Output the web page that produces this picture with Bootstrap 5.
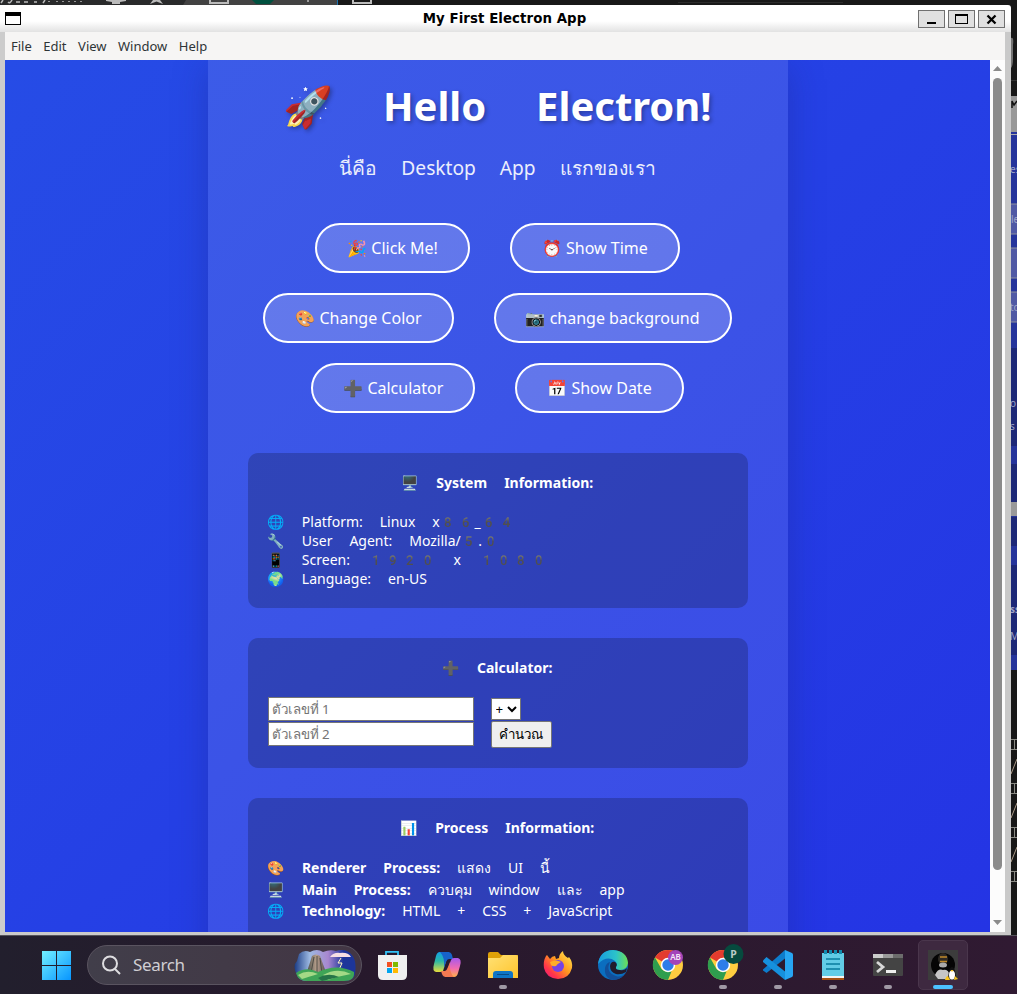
<!DOCTYPE html>
<html lang="en">
<head>
<meta charset="utf-8">
<title>My First Electron App</title>
<link rel="stylesheet" href="https://cdn.jsdelivr.net/npm/bootstrap@5.3.0/dist/css/bootstrap.min.css">
<style>
html,body{width:1017px;height:994px;overflow:hidden;margin:0}
body{background:#181818;font-family:"Noto Sans","Noto Color Emoji",sans-serif;color:#fff;line-height:1.2}
svg{display:block;flex:none}
.backtop{height:5px;flex:none}
.main-area{height:930px;flex:none}
.win{width:1011px;flex:none}
.titlebar{height:27px;background:linear-gradient(#fff 60%,#e2e2e2);color:#000;border-top-right-radius:3px;padding:0 6px 0 5px}
.titlebar .ttl{font:bold 13.33px/26px "DejaVu Sans",sans-serif;padding-left:70px;letter-spacing:.08px}
.wbtn{width:27px;height:18px;background:#e0e0e0;border:1px solid #707070}
.frame{border-left:5px solid #ccc;border-right:6px solid #c9c9c9;border-bottom:3px solid #cbcaca;height:903px}
.menus{height:28px;background:#f6f5f4;color:#2e3436;font-size:13px;line-height:28px;padding-left:6px;gap:11.5px}
.view{width:985px;height:872px;background:linear-gradient(135deg,#264ce6 0%,#2434e4 100%);overflow:hidden}
.sbar{width:15px;background:#fcfcfc;padding:6px 0 4px}
.thumb{width:9px;height:792px;border-radius:5px;background:#8b8b8b;margin-top:7px}
.panel{width:580px;height:960px;background:rgba(255,255,255,.1);box-shadow:0 8px 32px rgba(31,38,135,.37);padding:18px 40px 0;margin-left:202.5px}
.em{font-family:"Noto Color Emoji","Noto Sans",sans-serif}
h1{font-size:40px;font-weight:700;line-height:60px;margin:0;text-shadow:2px 2px 4px rgba(0,0,0,.3)}
.sub{font-size:19.2px;line-height:30px;margin:16px 0 39px;opacity:.9}
.pill{height:50px;border:2px solid #fff;border-radius:25px;background:rgba(255,255,255,.2);color:#fff;font-size:16px;padding:0 30px;line-height:1}
.brow{gap:40px;margin:0 -20px 20px}
.brow.last{margin-bottom:40px}
.info{width:500px;background:rgba(0,0,0,.2);border-radius:10px;padding:20px;font-size:14px;margin-bottom:30px;word-spacing:-.5px}
.info h2{font-size:14px;font-weight:700;line-height:20px;margin:0 0 19px;word-spacing:-.4px}
.info .fld,.info .opsel,.info .cbtn{word-spacing:0}
.ln{line-height:19px;height:19px;white-space:nowrap}
.ln.tall{line-height:22px;height:22px}
.fld{width:206px;height:24px;border:1px solid #767676;background:#fff;padding:0 3px;font:13.33px "Noto Sans",sans-serif;color:#000}
.fld::placeholder{color:#757575}
.opsel{width:30px;height:22px;font:13.33px "Noto Sans",sans-serif;padding:0;border:1px solid #767676;background:#fff}
.cbtn{width:61px;height:27px;border:1px solid #767676;border-radius:2px;background:#efefef;font:13.33px "Noto Sans",sans-serif;padding:0;color:#000}
.task{height:59px;background:linear-gradient(90deg,#221f2d,#27192c 35%,#301a32);border-top:1px solid #55535a;padding-left:42px}
.search{width:275px;height:40px;border-radius:20px;background:linear-gradient(90deg,#413e4a,#433644);border:1px solid #5a5460;color:#d0ced3;font-size:17px;margin:9px 3px 0 16px;padding:0 5px 0 14px}
.search span{padding-left:12px;letter-spacing:-.35px}
.app{width:55px;height:58px;padding-top:14px;flex:none}
.app i{display:block;width:8px;height:4px;border-radius:2px;background:#a099a5;margin-top:5px}
.app.on{width:50px;height:50px;border-radius:5px;background:#3e2940;border:1px solid #4a364c;margin:4px 0 0 3px;padding-top:9px}
.app.on i{width:20px;background:#4cc2ff}
</style>
</head>
<body class="d-flex flex-column">
<svg class="backtop" width="1017" height="5" viewBox="0 0 1017 5"><rect width="1017" height="5" fill="#292a2b"/><path d="M186 0H337V5H183Z" fill="#424242"/><rect x="338" width="679" height="5" fill="#181818"/><path d="M337.500 0V5" stroke="#1a70ae"/><path d="M106 0H126V1L120 2V4H112V2L106 1ZM150 4L153 0H160L163 4L156.500 1.500Z" fill="#bbb"/><g fill="none" stroke="#bbb" stroke-width="2"><path d="M210 0V3H228V0M353 0V3H371V0"/><path d="M1 3L3 0M8 2Q10 4 12 0M16 2H20M24 2H28M34 2H37M43 3L45 0M49 1V2M57 1V2M63 1V2M69 1V2M75 1V2M81 1V2M308 0V2" stroke-width="1.500"/></g><path d="M252 0H274L270 4H256Z" fill="#00503f"/><path d="M678 2.500H843" stroke="#2c2c2c"/></svg>
<div class="main-area d-flex">
<div class="win">
 <div class="titlebar d-flex align-items-center">
  <svg width="16" height="15" viewBox="0 0 16 15"><rect x=".5" y="1.500" width="15" height="12" fill="#fff" stroke="#000"/><path d="M0 1H16V5H0Z"/></svg>
  <div class="ttl flex-grow-1 text-center">My First Electron App</div>
  <div class="d-flex" style="gap:3px">
   <div class="wbtn"><svg width="25" height="16"><path d="M8 11H17V13H8Z"/></svg></div>
   <div class="wbtn"><svg width="25" height="16"><path d="M6 3H19V13H6ZM7 5V12H18V5Z" fill-rule="evenodd"/></svg></div>
   <div class="wbtn"><svg width="25" height="16"><path d="M8.500 4.500L16.500 12.500M16.500 4.500L8.500 12.500" stroke="#000" stroke-width="2.300"/></svg></div>
  </div>
 </div>
 <div class="frame">
  <div class="menus d-flex"><span>File</span><span>Edit</span><span>View</span><span>Window</span><span>Help</span></div>
  <div class="d-flex">
   <div class="view"><div class="panel">
    <h1 class="em text-center text-nowrap">🚀 Hello Electron!</h1>
    <div class="sub em text-center">นี่คือ Desktop App แรกของเรา</div>
    <div class="brow d-flex justify-content-center"><button class="pill">🎉 Click Me!</button><button class="pill">⏰ Show Time</button></div>
    <div class="brow d-flex justify-content-center"><button class="pill text-nowrap">🎨 Change Color</button><button class="pill text-nowrap">📷 change background</button></div>
    <div class="brow last d-flex justify-content-center"><button class="pill">➕ Calculator</button><button class="pill">📅 Show Date</button></div>
    <div class="info em" style="height:155px"><h2 class="em text-center mb-0">🖥️ System Information:</h2>
     <div style="padding-top:20px"><div class="ln">🌐 Platform: Linux x86_64</div><div class="ln">🔧 User Agent: Mozilla/5.0</div><div class="ln">📱 Screen: 1920 x 1080</div><div class="ln">🌍 Language: en-US</div></div></div>
    <div class="info em" style="height:130px"><h2 class="em text-center">➕ Calculator:</h2>
     <div class="d-flex" style="gap:17px"><div class="d-flex flex-column" style="gap:1px"><input class="fld" placeholder="ตัวเลขที่ 1"><input class="fld" placeholder="ตัวเลขที่ 2"></div>
     <div class="d-flex flex-column" style="gap:1px;padding-top:1px"><select class="opsel"><option>+</option></select><button class="cbtn">คำนวณ</button></div></div></div>
    <div class="info em" style="height:200px"><h2 class="em text-center">📊 Process Information:</h2>
     <div class="ln tall">🎨 <b>Renderer Process:</b> แสดง UI นี้</div>
     <div class="ln tall">🖥️ <b>Main Process:</b> ควบคุม window และ app</div>
     <div class="ln" style="height:21px;line-height:21px">🌐 <b>Technology:</b> HTML + CSS + JavaScript</div></div>
   </div></div>
   <div class="sbar d-flex flex-column align-items-center">
    <svg width="9" height="5"><path d="M4.500 0L9 5H0Z" fill="#8b8b8b"/></svg>
    <div class="thumb"></div><div class="flex-grow-1"></div>
    <svg width="9" height="5" style="margin-bottom:3px"><path d="M4.500 5L9 0H0Z" fill="#8b8b8b"/></svg>
   </div>
  </div>
 </div>
</div>
<svg width="6" height="930" viewBox="1011 5 6 930"><rect x="1011" y="5" width="6" height="930" fill="#181818"/><path d="M1011 38Q1014 36 1013 45V58Q1013 66 1011 68" fill="#737373"/><path d="M1011 80.500H1017" stroke="#333"/><rect x="1011" y="96" width="6" height="36" fill="#989898"/><path d="M1012 108V101L1014 105L1017 101" fill="none" stroke="#111" stroke-width="1.500"/><rect x="1011" y="132" width="6" height="538" fill="#25349b"/><path d="M1011 134.500H1017" stroke="#aaa"/><g fill="#5059a4" stroke="#8c8f9c"><path d="M1010 204H1018V234H1010ZM1010 248H1018V278H1010ZM1010 292H1018V322H1010Z"/></g><rect x="1011" y="348" width="6" height="98" fill="#1d2877"/><rect x="1011" y="464" width="6" height="82" fill="#1d2877"/><rect x="1011" y="502" width="6" height="14" fill="#999"/><rect x="1011" y="516" width="6" height="1" fill="#25349b"/><rect x="1011" y="565" width="6" height="90" fill="#1d2877"/><g font-family="Noto Sans" font-size="10" fill="#9da4c8"><text x="1010" y="173">es</text><text x="1011" y="223">le</text><text x="1010" y="311">to</text><text x="1010" y="407">o</text><text x="1010" y="430">s</text><text x="1010" y="613" font-weight="700">ss</text><text x="1010" y="640">M</text></g><g fill="none" stroke="#8a8a83"><path d="M1011 739.500H1017M1011 749.500H1017M1014.500 739V750M1011 783.500H1017M1011 793.500H1017M1014.500 783V794M1011 827.500H1017M1011 837.500H1017M1014.500 827V838M1011 871.500H1017M1011 881.500H1017M1014.500 871V882"/><path d="M1011 774L1017 759M1011 818L1017 803M1011 862L1017 847" stroke="#a98"/></g></svg>
</div>
<div class="task d-flex">
 <svg width="29" height="58" viewBox="0 0 29 58"><defs><linearGradient id="wn" x1="0" y1="15" x2="29" y2="44" gradientUnits="userSpaceOnUse"><stop stop-color="#72f0ff"/><stop offset="1" stop-color="#0795ff"/></linearGradient></defs><path d="M0 15H14V29H0ZM15 15H29V29H15ZM0 30H14V44H0ZM15 30H29V44H15Z" fill="url(#wn)"/></svg>
 <div class="search d-flex align-items-center">
  <svg width="19" height="20" viewBox="0 0 19 20"><g fill="none" stroke="#dedde0" stroke-width="2"><circle cx="8" cy="8.500" r="7"/><path d="M13 14L18 19"/></g></svg>
  <span class="flex-grow-1">Search</span>
  <svg width="62" height="33" viewBox="0 0 62 33"><defs><linearGradient id="sk"><stop stop-color="#1b3d86"/><stop offset=".25" stop-color="#9db9e2"/><stop offset=".55" stop-color="#a887cf"/><stop offset=".8" stop-color="#1d359a"/></linearGradient><linearGradient id="rk"><stop stop-color="#3f4744"/><stop offset=".5" stop-color="#b9a08c"/><stop offset="1" stop-color="#4e4550"/></linearGradient></defs><path d="M5 5Q10 0 16 3Q23-1 29 3Q36 0 42 2Q52-1 58 6Q63 12 61 25Q60 32 50 32H13Q5 32 3 26Q-2 17 3 12Z" fill="url(#sk)"/><path d="M12 26L18 7Q22 4 26 7L33 26Z" fill="url(#rk)"/><path d="M20 8L17 24M23 7V25M26 9L28 25" stroke="#4c4b45"/><path d="M36 8Q40 3 46 4Q54 3 57 8Z" fill="#f6dfe4"/><path d="M47 9L44 14H48L45 21" stroke="#fff8c0" fill="none"/><path d="M2 24Q12 17 24 23Q43 14 60 23Q61 32 50 32H13Q4 32 2 24Z" fill="#3fa557"/><path d="M4 26Q13 20 24 25Q14 28 8 30M29 26Q43 18 57 25Q45 27 34 31" fill="#a4d986"/><path d="M24 29Q34 23 45 28Q36 30 28 32" fill="#267448"/></svg>
 </div>
 <div class="app d-flex flex-column align-items-center" style="padding-right:1px"><svg width="30" height="30" viewBox="0 0 30 30"><path d="M9 6V1.800H21V6" stroke="#32c3f7" stroke-width="1.800" fill="none"/><path d="M1 5H30V25Q30 30 25 30H6Q1 30 1 25Z" fill="#f0f0f0"/><path d="M10 12H15V17H10Z" fill="#f25022"/><path d="M16 12H21V17H16Z" fill="#7fba00"/><path d="M10 18H15V23H10Z" fill="#00a4ef"/><path d="M16 18H21V23H16Z" fill="#ffb900"/></svg></div>
 <div class="app d-flex flex-column align-items-center" style="padding-right:1px"><svg width="30" height="30" viewBox="0 0 30 30"><defs><linearGradient id="cp1" x2="0" y2="1"><stop stop-color="#14a0e6"/><stop offset=".45" stop-color="#29b8a6"/><stop offset="1" stop-color="#e7dc3c"/></linearGradient><linearGradient id="cp2" x2="0" y2="1"><stop stop-color="#a758ed"/><stop offset=".55" stop-color="#f16bb0"/><stop offset="1" stop-color="#ffb34a"/></linearGradient></defs><path d="M8 2H17L11 21Q10 22 8 22H4Q0 21 2 14L4 6Q5 2 8 2Z" fill="url(#cp1)"/><path d="M8 2H16Q19 2 20 5L21 9H17Q15 9 14 12L12 18Q13 7 8 2Z" fill="#1763c9"/><path d="M22 27H13L19 10Q20 8 22 8H26Q30 9 28 16L26 23Q25 27 22 27Z" fill="url(#cp2)"/><path d="M22 27H14Q11 27 10 24L9 21H13Q15 20 16 17L18 12Q17 23 22 27Z" fill="#f37a52"/></svg></div>
 <div class="app d-flex flex-column align-items-center"><svg width="30" height="30" viewBox="0 0 30 30"><defs><linearGradient id="fo" x2="1" y2="1"><stop stop-color="#ffe175"/><stop offset="1" stop-color="#ffc42c"/></linearGradient></defs><path d="M0 4Q0 2 2 2H10L13 5H30V13H0Z" fill="#dfa108"/><path d="M0 8H12L15 5H28Q30 5 30 7V28H0Z" fill="url(#fo)"/><path d="M5 28V24Q5 21 8 21H22Q25 21 25 24V28Z" fill="#0f75c6"/><path d="M9 24.500H21" stroke="#084c87"/></svg><i></i></div>
 <div class="app d-flex flex-column align-items-center"><svg width="30" height="30" viewBox="0 0 30 30"><defs><linearGradient id="ff" x1="1" x2="0" y2="1"><stop stop-color="#fff255"/><stop offset=".45" stop-color="#ff981f"/><stop offset=".75" stop-color="#ff334b"/><stop offset="1" stop-color="#e5178a"/></linearGradient></defs><path d="M3 6L4 5L7 9Q9 6 12 6L13 9L16 8Q16 4 20 1Q20 5 25 8L26 7Q30 12 29 18Q26 29 15 29Q3 28 1 18Q0 11 3 6Z" fill="url(#ff)"/><circle cx="15" cy="16" r="6" fill="#7542e5"/><path d="M7 12Q13 9 18 12Q14 14 13 16Q10 17 8 15" fill="#ffad28"/></svg></div>
 <div class="app d-flex flex-column align-items-center"><svg width="30" height="30" viewBox="0 0 30 30"><defs><linearGradient id="eg"><stop stop-color="#189bdf"/><stop offset=".6" stop-color="#2cc3ca"/><stop offset="1" stop-color="#6de053"/></linearGradient></defs><circle cx="15" cy="15" r="15" fill="#0b6ebf"/><path d="M0 14Q2 0 15 0Q29 1 30 13Q29 20 22 20Q17 20 18 17Q20 14 17 11Q9 5 0 14Z" fill="url(#eg)"/><path d="M12 12Q7 22 18 26Q24 28 28 22Q24 29 16 30Q6 29 7 18Q8 13 12 12Z" fill="#124f9a"/><path d="M12 16Q13 11 17 12Q20 14 18 17Q17 20 22 20Q26 21 29 18L28 22Q23 25 18 24Q12 22 12 16Z" fill="#221b2c"/></svg></div>
 <div class="app d-flex flex-column align-items-center"><svg width="30" height="30" viewBox="0 0 30 30" overflow="visible"><g id="chr"><circle cx="15" cy="15" r="15" fill="#ffcd40"/><path d="M15 15L2 7.500Q6 0 15 0Q24 0 28 7.500H15Z" fill="#e33b2e"/><path d="M2 7.500L8.500 19Q12 23 18.500 21.500L15 30Q4 30 0 18Q-1 12 2 7.500Z" fill="#2f9e4e"/><circle cx="15" cy="15" r="7.200" fill="#fff"/><circle cx="15" cy="15" r="5.700" fill="#2f7de9"/></g><circle cx="22.500" cy="7.500" r="7.500" fill="#a445b9"/><text x="22.500" y="10.300" text-anchor="middle" font-size="8" font-weight="600" fill="#f6e9f8">AB</text></svg></div>
 <div class="app d-flex flex-column align-items-center"><svg width="30" height="30" viewBox="0 0 30 30" overflow="visible"><use href="#chr"/><circle cx="25.500" cy="4" r="10" fill="#064a3e"/><text x="25.500" y="7.500" text-anchor="middle" font-size="10.500" font-weight="700" fill="#b9cbc6">P</text></svg><i></i></div>
 <div class="app d-flex flex-column align-items-center"><svg width="30" height="30" viewBox="0 0 30 30"><path d="M0 19.500L22 0V8.500L3.500 23L0 20.500Z" fill="#0d7ccc"/><path d="M0 10.500L3.500 7L22 21.500V30L0 12Z" fill="#1690dd"/><path d="M22 0L29 3Q30 3.500 30 5V25Q30 26.500 29 27L22 30Z" fill="#27a5f2"/></svg><i></i></div>
 <div class="app d-flex flex-column align-items-center"><svg width="30" height="30" viewBox="0 0 30 30"><path d="M4 24H26V30H4Z" fill="#a44f12"/><path d="M4 24H26V28H4Z" fill="#f3f4f3"/><path d="M4 3H26V26H4Z" fill="#62cce6"/><path d="M8 9H22M8 14H22M8 19H22" stroke="#087c9f" stroke-width="1.700"/><path d="M7.500 0V4M12.500 0V4M17.500 0V4M22.500 0V4" stroke="#128caf" stroke-width="3"/></svg><i></i></div>
 <div class="app d-flex flex-column align-items-center"><svg width="30" height="30" viewBox="0 0 30 30"><rect y="4" width="30" height="22" rx="1" fill="#444"/><path d="M0 4H10V8H0Z" fill="#ccc"/><path d="M10 4H20V8H10Z" fill="#999"/><path d="M20 4H30V8H20Z" fill="#6c6c6c"/><path d="M4 12L10 17L4 22" fill="none" stroke="#d8d8d8" stroke-width="2.800"/><path d="M13 20H23V23H13Z" fill="#eee"/></svg><i></i></div>
 <div class="app on d-flex flex-column align-items-center"><svg width="30" height="30" viewBox="0 0 30 30"><path d="M0 0H30V30H0Z" fill="#3c3c3c"/><circle cx="15" cy="15" r="12" fill="#050505"/><ellipse cx="15" cy="9" rx="5" ry="6" fill="#2e2a24"/><path d="M12 7H19M12 11.500H19" stroke="#c08a2b" stroke-width="1.500"/><ellipse cx="15" cy="15" rx="4" ry="2.500" fill="#aaa"/><path d="M7 25Q10 18 15 20Q20 19 22 25L18 29H10Z" fill="#c6c6c6"/><path d="M20 28Q21 17 24 17Q27 17 28 28Z" fill="#111"/><ellipse cx="24" cy="25" rx="3" ry="4.500" fill="#fff"/><path d="M17 30Q18 26 20 26L22 30ZM27 26L30 29L26 30ZM22.500 20H25.500L24 22Z" fill="#f8c21b"/></svg><i></i></div>
</div>
<script src="https://cdn.jsdelivr.net/npm/bootstrap@5.3.0/dist/js/bootstrap.bundle.min.js"></script>
</body>
</html>
